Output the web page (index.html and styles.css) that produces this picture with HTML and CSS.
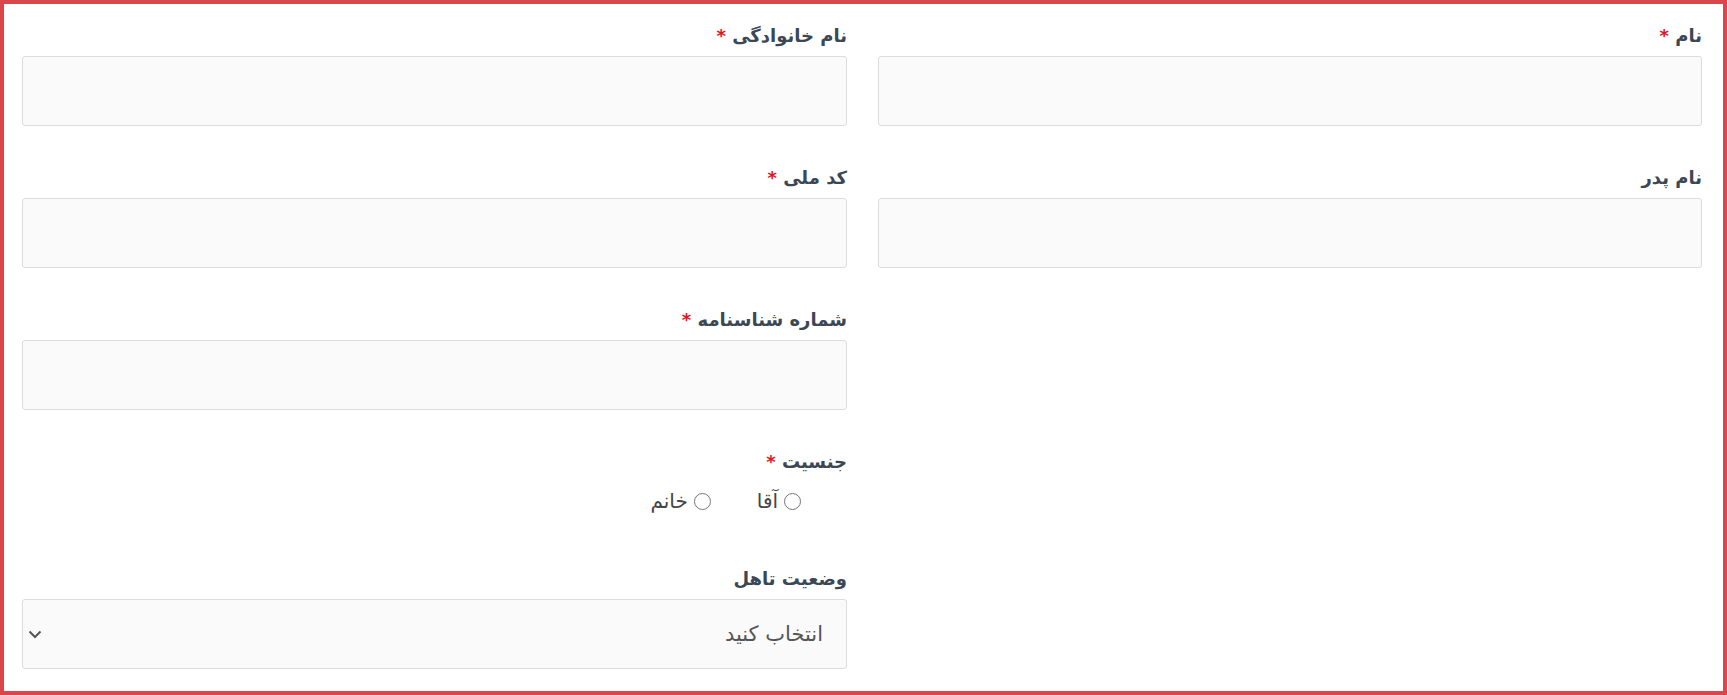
FILE: index.html
```html
<!DOCTYPE html>
<html lang="fa" dir="rtl">
<head>
<meta charset="utf-8">
<title>فرم</title>
<link rel="stylesheet" href="styles.css">
</head>
<body>
<div class="frame">
  <form class="form">
    <div class="field">
      <label class="label">نام <span class="req">*</span></label>
      <input class="input" type="text">
    </div>
    <div class="field">
      <label class="label">نام خانوادگی <span class="req">*</span></label>
      <input class="input" type="text">
    </div>
    <div class="field">
      <label class="label">نام پدر</label>
      <input class="input" type="text">
    </div>
    <div class="field">
      <label class="label">کد ملی <span class="req">*</span></label>
      <input class="input" type="text">
    </div>
    <div class="field col-left">
      <label class="label">شماره شناسنامه <span class="req">*</span></label>
      <input class="input" type="text">
    </div>
    <div class="field col-left">
      <label class="label">جنسیت <span class="req">*</span></label>
      <div class="radios">
        <label class="radio"><input type="radio" name="g"><span>آقا</span></label>
        <label class="radio"><input type="radio" name="g"><span>خانم</span></label>
      </div>
    </div>
    <div class="field col-left">
      <label class="label">وضعیت تاهل</label>
      <div class="select-wrap">
        <select class="select">
          <option>انتخاب کنید</option>
        </select>
        <svg class="chev" width="14" height="9" viewBox="0 0 14 9"><path d="M1.5 1.5 L7 7 L12.5 1.5" fill="none" stroke="#555" stroke-width="2"/></svg>
      </div>
    </div>
  </form>
</div>
</body>
</html>
```
FILE: styles.css
```css
html, body {
  margin: 0;
  padding: 0;
  background: #fff;
}
.frame {
  box-sizing: border-box;
  width: 1727px;
  height: 695px;
  border: 4px solid #db464b;
  padding: 20px 21px 0 18px;
  font-family: "DejaVu Sans", "Noto Sans", sans-serif;
  overflow: hidden;
}
.form {
  display: grid;
  grid-template-columns: 824px 825px;
  column-gap: 31px;
  row-gap: 40px;
  direction: rtl;
}
.col-left {
  grid-column: 2;
}
.field {
  display: flex;
  flex-direction: column;
  align-items: stretch;
}
.label {
  display: block;
  font-size: 18px;
  font-weight: bold;
  line-height: 24px;
  height: 24px;
  color: #3b4754;
  margin-bottom: 8px;
}
.req {
  color: #e3141c;
}
.input, .select {
  box-sizing: border-box;
  width: 100%;
  height: 70px;
  border: 1px solid #dcdcdc;
  border-radius: 3px;
  background: #fafafa;
  font-family: inherit;
  font-size: 21px;
  color: #555;
  margin: 0;
}
.radios {
  display: flex;
  gap: 46px;
  height: 26px;
  align-items: center;
  padding-right: 46px;
  margin-top: 6px;
  margin-bottom: 13px;
}
.radio {
  display: flex;
  align-items: center;
  gap: 6px;
  font-size: 20px;
  color: #444;
}
.radio input {
  width: 17px;
  height: 17px;
  margin: 0;
}
.select-wrap {
  position: relative;
}
.select {
  appearance: none;
  -webkit-appearance: none;
  padding: 0 23px 0 40px;
}
.chev {
  position: absolute;
  left: 6px;
  top: 31px;
  pointer-events: none;
}
```
